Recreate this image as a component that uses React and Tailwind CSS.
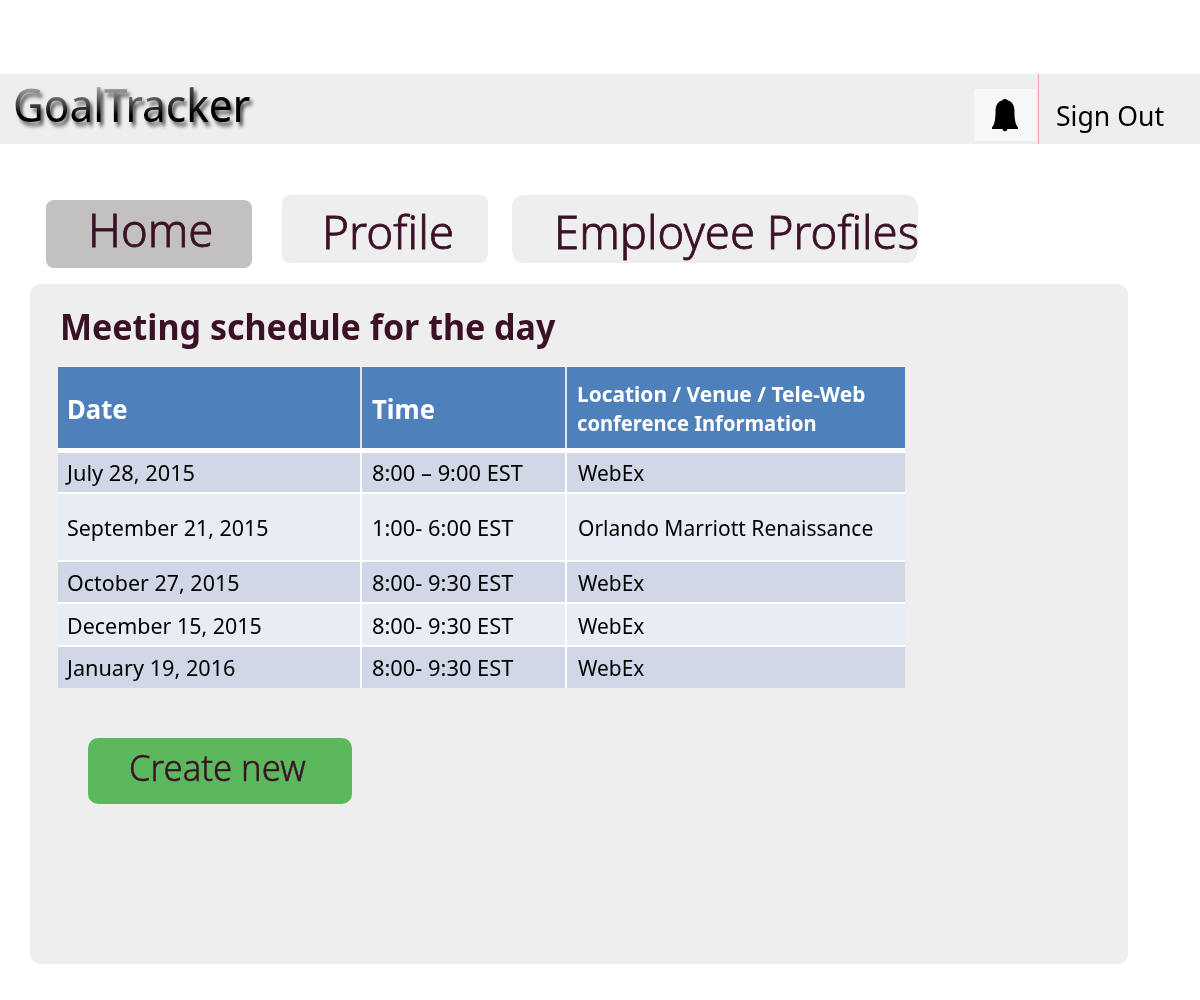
import React from "react";

const tabs = [
  { label: "Home", box: "mt-[5px] w-[206px] bg-[#c2c1bf] pl-[42px] rounded-lg", text: "pt-px leading-[57px] scale-x-[1.01]" },
  { label: "Profile", box: "ml-[30px] w-[206px] bg-[#eeeeee] pl-[40px] rounded-lg", text: "pt-[5px] leading-[63px] scale-x-[1.02]" },
  { label: "Employee Profiles", box: "ml-6 w-[406px] bg-[#eeeeee] pl-[42px] rounded-xl", text: "pt-[5px] leading-[63px] scale-x-[1.01]" },
];

const meetings = [
  { date: "July 28, 2015", time: "8:00 – 9:00 EST", place: "WebEx", row: "h-[39px] pb-[2px] bg-[#d0d7e7]", nudge: "pl-[9px]", fit: "scale-x-[0.99]", placeFit: "scale-x-[0.95]" },
  { date: "September 21, 2015", time: "1:00- 6:00 EST", place: "Orlando Marriott Renaissance", row: "h-[66px] bg-[#e8edf5]", nudge: "pl-[9px]", fit: "scale-x-[0.975]", placeFit: "scale-x-[0.955]" },
  { date: "October 27, 2015", time: "8:00- 9:30 EST", place: "WebEx", row: "h-[40px] pb-px bg-[#d0d7e7]", nudge: "pl-[9px]", fit: "scale-x-[0.975]", placeFit: "scale-x-[0.95]" },
  { date: "December 15, 2015", time: "8:00- 9:30 EST", place: "WebEx", row: "h-[41px] bg-[#e8edf5]", nudge: "pl-[9px]", fit: "scale-x-[0.975]", placeFit: "scale-x-[0.95]" },
  { date: "January 19, 2016", time: "8:00- 9:30 EST", place: "WebEx", row: "h-[41px] pb-px bg-[#d0d7e7]", nudge: "pl-[9px]", fit: "scale-x-[0.985]", placeFit: "scale-x-[0.95]" },
];

function Header() {
  return (
    <header className="mt-[74px] flex h-[70px] bg-[#eeeeee]">
      <h1 className="ml-[13px] h-[60px] w-[260px] origin-left scale-x-[0.92] whitespace-nowrap bg-[linear-gradient(90deg,transparent_55%,#000_90%),linear-gradient(180deg,#a0a0a0_24%,#000_69%)] bg-clip-text text-[46px] leading-[60px] text-transparent drop-shadow-[3px_4px_2px_rgba(0,0,0,0.65)]">
        GoalTracker
      </h1>
      <button className="ml-[701px] mt-[15px] flex h-[52px] w-[62px] justify-center bg-[#f6f7f9]" aria-label="Notifications">
        <svg className="mt-[9px] h-[34px] w-[28px]" viewBox="0 0 28 34">
          <path d="M14 1C12.6 1 11.6 1.6 11.1 2.5C6.8 3.7 4.7 7.3 4.6 12C4.5 19.5 4.2 25.5 1 29.500V31H11.5Q12 33.2 14 33.2Q16 33.2 16.5 31H27V29.5C23.8 25.5 23.5 19.5 23.4 12C23.3 7.3 21.2 3.7 16.9 2.5C16.4 1.6 15.4 1 14 1Z" fill="#000" />
        </svg>
      </button>
      <div className="ml-[2px] w-px bg-[#f3a3a5]" />
      <a className="ml-[17px] origin-left scale-x-[0.95] whitespace-nowrap pt-px text-[28px] leading-[80px] text-black">Sign Out</a>
    </header>
  );
}

function ScheduleTable() {
  return (
    <div className="mt-4 ml-7 w-[847px] border-t border-[#f8f9fb] bg-white text-[22px] leading-[30px] text-black">
      <div className="grid h-[81px] grid-cols-[302px_203px_338px] gap-x-[2px] bg-[#dce5f1] font-bold text-white">
        <div className="flex items-center bg-[#4e80bb] pt-[2px] pl-[9px] text-[27px]"><span className="origin-left scale-x-[0.95]">Date</span></div>
        <div className="flex items-center bg-[#4e80bb] pt-[2px] pl-[10px] text-[27px]"><span className="origin-left scale-x-[0.953]">Time</span></div>
        <div className="flex flex-col justify-center whitespace-nowrap bg-[#4e80bb] pl-[10px] leading-[29px]">
          <span className="origin-left scale-x-[0.95]">Location / Venue / Tele-Web</span>
          <span className="origin-left scale-x-[0.915]">conference Information</span>
        </div>
      </div>
      <div className="mt-[5px] flex flex-col gap-[2px]">
        {meetings.map((m) => (
          <div key={m.date} className="grid grid-cols-[302px_203px_338px] gap-x-[2px] whitespace-nowrap">
            <div className={`flex items-center ${m.row} ${m.nudge}`}><span className={`origin-left ${m.fit}`}>{m.date}</span></div>
            <div className={`flex items-center pl-[10px] ${m.row}`}><span className="origin-left scale-x-[0.993]">{m.time}</span></div>
            <div className={`flex items-center pl-[11px] ${m.row}`}><span className={`origin-left ${m.placeFit}`}>{m.place}</span></div>
          </div>
        ))}
      </div>
    </div>
  );
}

export default function App() {
  return (
    <div className="flow-root h-[1000px] w-[1200px] overflow-hidden bg-white font-['Noto_Sans','Open_Sans',sans-serif]">
      <Header />
      <nav className="mt-[51px] ml-[46px] flex items-start text-[45px] font-light text-[#3b1127]">
        {tabs.map((t) => (
          <a key={t.label} className={`block h-[68px] whitespace-nowrap ${t.box}`}>
            <span className={`block w-max origin-left [-webkit-text-stroke:0.8px_#3b1127] ${t.text}`}>{t.label}</span>
          </a>
        ))}
      </nav>
      <main className="mt-4 ml-[30px] flow-root h-[680px] w-[1098px] rounded-[10px] bg-[#eeeeee] text-[#3b1127]">
        <h2 className="mt-5 ml-[30px] w-max origin-left scale-x-[0.944] text-[36px] leading-[46px] font-bold">Meeting schedule for the day</h2>
        <ScheduleTable />
        <button className="mt-[50px] ml-[58px] block h-[66px] w-[264px] rounded-[10px] bg-[#5cb85c] pb-[6px] pl-[41px] text-left text-[36px] leading-[60px] font-light">
          <span className="block w-max origin-left scale-x-[0.962] [-webkit-text-stroke:0.5px_#3b1127]">Create new</span>
        </button>
      </main>
    </div>
  );
}
